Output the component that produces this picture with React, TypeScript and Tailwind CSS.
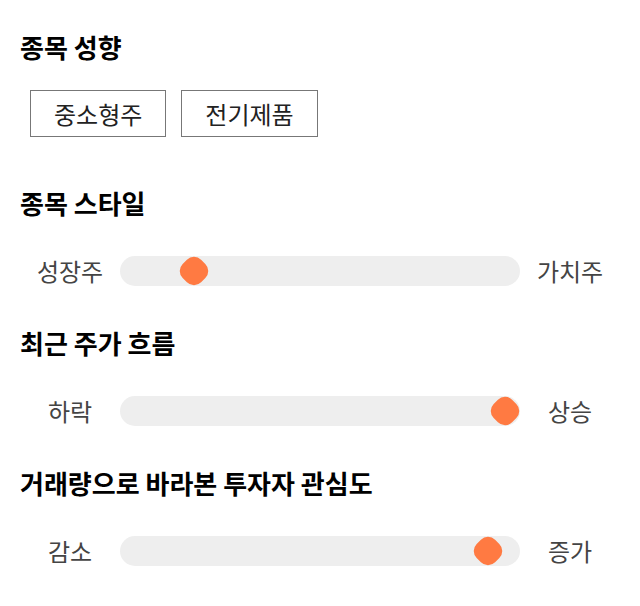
const sliders = [
  { title: '종목 스타일', left: '성장주', right: '가치주', value: 18.5 },
  { title: '최근 주가 흐름', left: '하락', right: '상승', value: 96.2 },
  { title: '거래량으로 바라본 투자자 관심도', left: '감소', right: '증가', value: 92 },
];

const tags = ['중소형주', '전기제품'];

function Heading({ children }: { children: React.ReactNode }) {
  return (
    <h2 className="h-[34px] flex items-center text-[26px] font-bold text-black leading-none">
      {children}
    </h2>
  );
}

function StyleSlider({ left, right, value }: { left: string; right: string; value: number }) {
  return (
    <div className="grid grid-cols-[100px_400px_100px] items-center h-[30px] text-[24px] text-[#444]">
      <span className="text-center">{left}</span>
      <div className="relative h-[30px] rounded-full bg-[#eeeeee]">
        <div
          className="absolute top-1/2 -translate-x-1/2 -translate-y-1/2"
          style={{ left: `${value}%` }}
        >
          <div className="w-[26px] h-[26px] rotate-45 rounded-[10px] bg-[#ff7a42]" />
        </div>
      </div>
      <span className="text-center">{right}</span>
    </div>
  );
}

export default function App() {
  return (
    <div
      className="w-[640px] min-h-[606px] bg-white px-[20px] pt-[30px]"
      style={{ fontFamily: '"Noto Sans CJK KR", "Noto Sans", sans-serif' }}
    >
      <Heading>종목 성향</Heading>
      <div className="mt-[26px] flex gap-[15px] pl-[10px]">
        {tags.map((t) => (
          <div
            key={t}
            className="h-[47px] px-[23px] flex items-center border border-[#777] text-[24px] text-[#222]"
          >
            {t}
          </div>
        ))}
      </div>

      {sliders.map((s, i) => (
        <section key={s.title} className={i === 0 ? 'mt-[49px]' : 'mt-[43px]'}>
          <Heading>{s.title}</Heading>
          <div className="mt-[33px]">
            <StyleSlider left={s.left} right={s.right} value={s.value} />
          </div>
        </section>
      ))}
    </div>
  );
}
